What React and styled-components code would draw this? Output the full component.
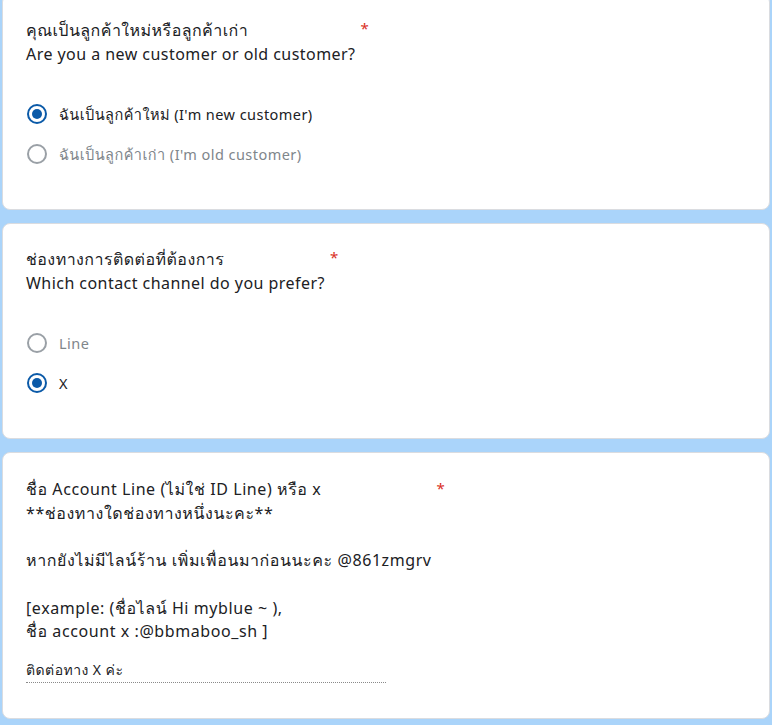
import React from 'react';
import styled, { createGlobalStyle } from 'styled-components';

const GlobalStyle = createGlobalStyle`
    html, body {
        margin: 0;
        padding: 0;
        background: #aad4fa;
    }
    body {
        font-family: "Noto Sans", "Loma", "Garuda", "Tlwg Typo", "DejaVu Sans", sans-serif;
        color: #202124;
        overflow: hidden;
        letter-spacing: 0.45px;
    }
`;

const Page = styled.div`
    display: flex;
    flex-direction: column;
    gap: 13px;
    padding: 0 2px;
    margin-top: -6px;
`;

const Card = styled.div`
    background: #ffffff;
    border: 1px solid #dadce0;
    border-radius: 8px;
    padding: ${props => props.$pad || '23px 24px 35px 23px'};
    display: flex;
    flex-direction: column;
`;

const TitleRow = styled.div`
    display: flex;
    align-items: flex-start;
`;

const Title = styled.div`
    font-size: 16px;
    line-height: ${props => props.$lh || '24px'};
    letter-spacing: ${props => props.$ls || '0.45px'};
    white-space: pre-line;
`;

const Star = styled.span`
    color: #d93025;
    font-size: 15px;
    line-height: 20px;
    margin-left: 5px;
`;

const Options = styled.div`
    display: flex;
    flex-direction: column;
    margin-top: 28px;
`;

const OptionRow = styled.label`
    display: flex;
    align-items: center;
    height: 40px;
    gap: 12px;
    font-size: 14.5px;
    color: ${props => (props.$checked ? '#202124' : '#80868b')};
`;

const Circle = styled.span`
    width: 20px;
    height: 20px;
    box-sizing: border-box;
    border-radius: 50%;
    border: 2px solid ${props => (props.$checked ? '#0b5aa8' : '#9aa0a6')};
    display: flex;
    align-items: center;
    justify-content: center;
    flex-shrink: 0;
    margin-left: 1px;

    &::after {
        content: '';
        width: 10px;
        height: 10px;
        border-radius: 50%;
        background: ${props => (props.$checked ? '#0b5aa8' : 'transparent')};
    }
`;

const Answer = styled.div`
    margin-top: 16px;
    width: 360px;
    font-size: 14px;
    line-height: 20px;
    padding-bottom: 2px;
    border-bottom: 1px dotted #8a8a8a;
`;

const Radio = ({ label, checked }) => (
    <OptionRow $checked={checked}>
        <Circle $checked={checked} />
        <span>{label}</span>
    </OptionRow>
);

const Question = ({ title, options }) => (
    <Card>
        <TitleRow>
            <Title>{title}</Title>
            <Star>*</Star>
        </TitleRow>
        <Options>
            {options.map(o => (
                <Radio key={o.label} label={o.label} checked={o.checked} />
            ))}
        </Options>
    </Card>
);

export default function App() {
    return (
        <>
            <GlobalStyle />
            <Page>
                <Question
                    title={'คุณเป็นลูกค้าใหม่หรือลูกค้าเก่า\nAre you a new customer or old customer?'}
                    options={[
                        { label: "ฉันเป็นลูกค้าใหม่ (I'm new customer)", checked: true },
                        { label: "ฉันเป็นลูกค้าเก่า (I'm old customer)", checked: false },
                    ]}
                />
                <Question
                    title={'ช่องทางการติดต่อที่ต้องการ\nWhich contact channel do you prefer?'}
                    options={[
                        { label: 'Line', checked: false },
                        { label: 'X', checked: true },
                    ]}
                />
                <Card $pad="25px 24px 35px 23px">
                    <TitleRow>
                        <Title $lh="23.7px" $ls="0.58px">
                            {'ชื่อ Account Line (ไม่ใช่ ID Line) หรือ x\n**ช่องทางใดช่องทางหนึ่งนะคะ**\n\nหากยังไม่มีไลน์ร้าน เพิ่มเพื่อนมาก่อนนะคะ @861zmgrv\n\n[example: (ชื่อไลน์ Hi myblue ~ ),\nชื่อ account x :@bbmaboo_sh ]'}
                        </Title>
                        <Star>*</Star>
                    </TitleRow>
                    <Answer>ติดต่อทาง X ค่ะ</Answer>
                </Card>
            </Page>
        </>
    );
}
